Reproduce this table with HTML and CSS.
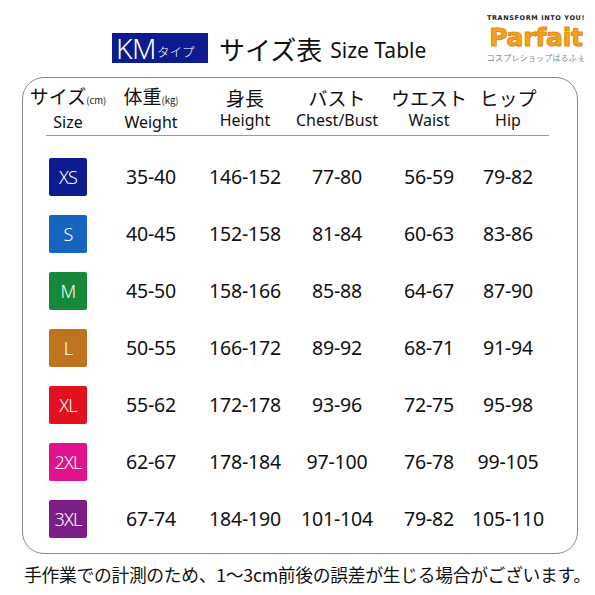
FILE: index.html
```html
<!DOCTYPE html>
<html lang="ja">
<head>
<meta charset="utf-8">
<link rel="stylesheet" href="styles.css">
</head>
<body>
<div class="page">
  <header class="top">
    <div class="title">
      <span class="km">KM<small>タイプ</small></span>
      <span class="jp">サイズ表</span>
      <span class="en">Size Table</span>
    </div>
    <div class="logo">
      <div class="tag">TRANSFORM INTO YOU!</div>
      <div class="brand">Parfait</div>
      <div class="shop">コスプレショップぱるふぇ</div>
    </div>
  </header>
  <section class="box">
    <div class="grid head">
      <div><div class="j">サイズ<small>(cm)</small></div><div class="e">Size</div></div>
      <div><div class="j">体重<small>(kg)</small></div><div class="e">Weight</div></div>
      <div><div class="j">身長</div><div class="e">Height</div></div>
      <div><div class="j">バスト</div><div class="e">Chest/Bust</div></div>
      <div><div class="j">ウエスト</div><div class="e">Waist</div></div>
      <div><div class="j">ヒップ</div><div class="e">Hip</div></div>
    </div>
    <div class="rule"></div>
    <div class="rows">
      <div class="grid row"><span class="badge xs">XS</span><span>35-40</span><span>146-152</span><span>77-80</span><span>56-59</span><span>79-82</span></div>
      <div class="grid row"><span class="badge s">S</span><span>40-45</span><span>152-158</span><span>81-84</span><span>60-63</span><span>83-86</span></div>
      <div class="grid row"><span class="badge m">M</span><span>45-50</span><span>158-166</span><span>85-88</span><span>64-67</span><span>87-90</span></div>
      <div class="grid row"><span class="badge l">L</span><span>50-55</span><span>166-172</span><span>89-92</span><span>68-71</span><span>91-94</span></div>
      <div class="grid row"><span class="badge xl">XL</span><span>55-62</span><span>172-178</span><span>93-96</span><span>72-75</span><span>95-98</span></div>
      <div class="grid row"><span class="badge xxl">2XL</span><span>62-67</span><span>178-184</span><span>97-100</span><span>76-78</span><span>99-105</span></div>
      <div class="grid row"><span class="badge xxxl">3XL</span><span>67-74</span><span>184-190</span><span>101-104</span><span>79-82</span><span>105-110</span></div>
    </div>
  </section>
  <p class="note">手作業での計測のため、1～3cm前後の誤差が生じる場合がございます。</p>
</div>
</body>
</html>
```
FILE: styles.css
```css
* { box-sizing: border-box; }
html, body { margin: 0; padding: 0; background: #fff; }
body {
  font-family: "Noto Sans", "Noto Sans CJK JP", sans-serif;
  color: #111;
  width: 595px;
  height: 595px;
  overflow: hidden;
}
.top {
  height: 77px;
  display: flex;
  align-items: flex-start;
}
.title {
  display: flex;
  align-items: center;
  margin-left: 112px;
  margin-top: 33px;
  height: 30px;
}
.km {
  background: #0c1c8e;
  color: #fff;
  width: 96px;
  height: 30px;
  display: flex;
  align-items: center;
  padding-left: 4px;
  font-size: 28px;
  font-weight: 300;
  letter-spacing: -0.5px;
}
.km small { font-size: 12.5px; margin-left: 1px; margin-top: 7px; letter-spacing: 0; }
.jp {
  font-family: "Noto Sans CJK JP", sans-serif;
  font-size: 26px;
  margin-left: 11px;
  font-weight: 400;
}
.en {
  font-size: 21px;
  margin-left: 8px;
  margin-top: 3px;
}
.logo {
  margin-left: auto;
  margin-right: 9px;
  margin-top: 14px;
  width: 100px;
  display: flex;
  flex-direction: column;
  align-items: center;
}
.logo > div { white-space: nowrap; }
.tag {
  font-family: "DejaVu Sans", sans-serif;
  font-size: 6.5px;
  font-weight: 700;
  letter-spacing: 0.6px;
  color: #222;
  line-height: 9px;
}
.brand {
  font-family: "DejaVu Sans", sans-serif;
  font-weight: 900;
  font-size: 25px;
  line-height: 30px;
  height: 30px;
  color: #f6a11c;
  letter-spacing: -0.2px;
  -webkit-text-stroke: 1px #e08a10;
}
.shop {
  font-family: "Noto Sans CJK JP", sans-serif;
  font-size: 8px;
  line-height: 10px;
  color: #888;
  letter-spacing: 0.2px;
}
.box {
  margin-left: 22px;
  width: 556px;
  height: 477px;
  border: 1.5px solid #8a8a8a;
  border-radius: 22px;
  padding-top: 6px;
}
.grid {
  display: grid;
  grid-template-columns: 90px 76px 112px 72px 112px 46px;
  justify-items: center;
  align-items: center;
}
.grid > * { white-space: nowrap; text-align: center; }
.head .j {
  font-family: "Noto Sans CJK JP", sans-serif;
  font-size: 19px;
  line-height: 24px;
}
.head .j small { font-size: 9.5px; }
.head .e {
  font-size: 16px;
  line-height: 20px;
}
.rule {
  margin: 3px 0 0 23px;
  width: 503px;
  height: 1px;
  background: #9a9a9a;
}
.rows { margin-top: 12px; }
.row {
  height: 57px;
  font-size: 19.5px;
  letter-spacing: -0.2px;
}
.badge {
  width: 38px;
  height: 38px;
  border-radius: 2px;
  color: #fff;
  font-size: 18px;
  font-weight: 300;
  display: flex;
  align-items: center;
  justify-content: center;
  letter-spacing: -0.8px;
}
.xs { background: #0c1c8e; }
.s { background: #1565c0; }
.m { background: #16883a; }
.l { background: #c07420; }
.xl { background: #e3101f; }
.xxl { background: #e0128c; }
.xxxl { background: #7b1f86; }
.note {
  font-family: "Noto Sans CJK JP", sans-serif;
  margin: 8px 0 0 24px;
  font-size: 17.8px;
  line-height: 24px;
  letter-spacing: -0.3px;
  white-space: nowrap;
}
```
